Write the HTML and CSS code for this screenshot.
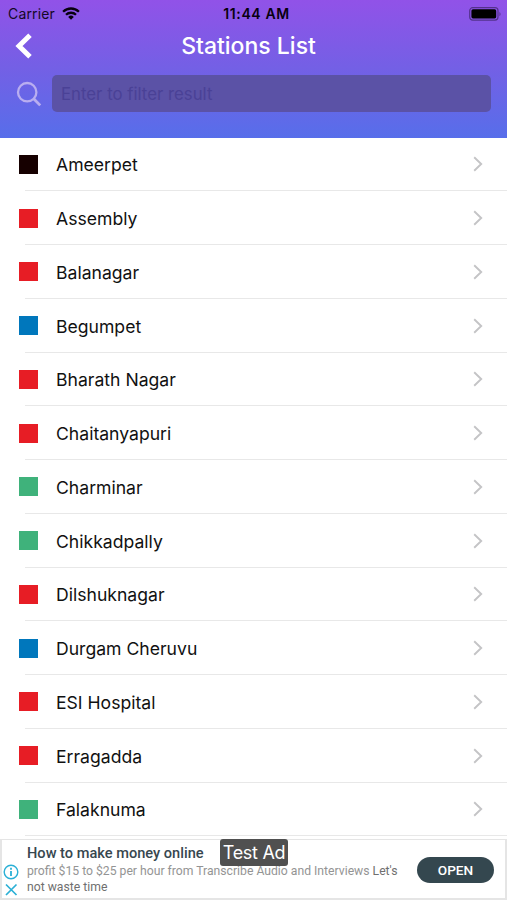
FILE: index.html
```html
<!DOCTYPE html>
<html lang="en">
<head>
<meta charset="utf-8">
<title>Stations List</title>
<link rel="stylesheet" href="styles.css">
</head>
<body>
<div class="app">
  <header class="header">
    <div class="status">
      <div class="carrier"><span>Carrier</span>
        <svg class="wifi" width="18" height="13" viewBox="0 0 18 13"><g fill="none" stroke="#08000f" stroke-width="2.3"><path d="M1.1 4.7a11.3 11.3 0 0 1 15.8 0"/><path d="M4 7.8a7.1 7.1 0 0 1 10 0"/></g><path fill="#08000f" d="M6.2 9.9a4 4 0 0 1 5.6 0L9 12.7z"/></svg>
      </div>
      <span class="time">11:44 AM</span>
      <svg class="battery" width="33" height="14" viewBox="0 0 33 14"><rect x=".7" y=".7" width="28.3" height="12.4" rx="3" fill="none" stroke="#08000f" stroke-opacity=".42" stroke-width="1.2"/><rect x="2.4" y="2.3" width="24.8" height="9.1" rx="1.6" fill="#000"/><path d="M30.5 4.7q2 2.3 0 4.6z" fill="#08000f" fill-opacity=".45"/></svg>
    </div>
    <div class="nav">
      <svg class="back" width="18" height="26" viewBox="0 0 18 26"><path d="M16 2.3 5 13l11 10.7" fill="none" stroke="#fff" stroke-width="5"/></svg>
      <h1 class="title">Stations List</h1>
      <span></span>
    </div>
    <div class="search">
      <svg width="26" height="26" viewBox="0 0 26 26"><g fill="none" stroke="#b9aef0" stroke-width="2.3"><circle cx="11.2" cy="11.2" r="9.2"/><path d="m17.7 17.7 6.5 6.7" stroke-width="2.8"/></g></svg>
      <div class="field">Enter to filter result</div>
    </div>
  </header>
  <main class="list">
    <div class="row"><i class="mark black"></i><span class="name">Ameerpet</span><svg class="chevron" viewBox="0 0 10 16"><path d="m1.2 1.2 7 6.8-7 6.8"/></svg></div>
    <div class="row"><i class="mark red"></i><span class="name">Assembly</span><svg class="chevron" viewBox="0 0 10 16"><path d="m1.2 1.2 7 6.8-7 6.8"/></svg></div>
    <div class="row"><i class="mark red"></i><span class="name">Balanagar</span><svg class="chevron" viewBox="0 0 10 16"><path d="m1.2 1.2 7 6.8-7 6.8"/></svg></div>
    <div class="row"><i class="mark blue"></i><span class="name">Begumpet</span><svg class="chevron" viewBox="0 0 10 16"><path d="m1.2 1.2 7 6.8-7 6.8"/></svg></div>
    <div class="row"><i class="mark red"></i><span class="name">Bharath Nagar</span><svg class="chevron" viewBox="0 0 10 16"><path d="m1.2 1.2 7 6.8-7 6.8"/></svg></div>
    <div class="row"><i class="mark red"></i><span class="name">Chaitanyapuri</span><svg class="chevron" viewBox="0 0 10 16"><path d="m1.2 1.2 7 6.8-7 6.8"/></svg></div>
    <div class="row"><i class="mark green"></i><span class="name">Charminar</span><svg class="chevron" viewBox="0 0 10 16"><path d="m1.2 1.2 7 6.8-7 6.8"/></svg></div>
    <div class="row"><i class="mark green"></i><span class="name">Chikkadpally</span><svg class="chevron" viewBox="0 0 10 16"><path d="m1.2 1.2 7 6.8-7 6.8"/></svg></div>
    <div class="row"><i class="mark red"></i><span class="name">Dilshuknagar</span><svg class="chevron" viewBox="0 0 10 16"><path d="m1.2 1.2 7 6.8-7 6.8"/></svg></div>
    <div class="row"><i class="mark blue"></i><span class="name">Durgam Cheruvu</span><svg class="chevron" viewBox="0 0 10 16"><path d="m1.2 1.2 7 6.8-7 6.8"/></svg></div>
    <div class="row"><i class="mark red"></i><span class="name">ESI Hospital</span><svg class="chevron" viewBox="0 0 10 16"><path d="m1.2 1.2 7 6.8-7 6.8"/></svg></div>
    <div class="row"><i class="mark red"></i><span class="name">Erragadda</span><svg class="chevron" viewBox="0 0 10 16"><path d="m1.2 1.2 7 6.8-7 6.8"/></svg></div>
    <div class="row"><i class="mark green"></i><span class="name">Falaknuma</span><svg class="chevron" viewBox="0 0 10 16"><path d="m1.2 1.2 7 6.8-7 6.8"/></svg></div>
  </main>
  <aside class="ad">
    <div class="ad-icons">
      <svg width="16" height="16" viewBox="0 0 16 16"><circle cx="8" cy="8" r="6.8" fill="none" stroke="#2bb0d6" stroke-width="1.4"/><path d="M8 7v5M8 3.7v2" stroke="#2bb0d6" stroke-width="1.8"/></svg>
      <svg width="16" height="14" viewBox="0 0 16 14"><path d="m3 1.5 10.5 10.5M13.500 1.500 3 12" stroke="#2bb0d6" stroke-width="1.7"/></svg>
    </div>
    <div class="ad-text">
      <div class="ad-title">How to make money online</div>
      <div class="ad-line">profit $15 to $25 per hour from Transcribe Audio and Interviews <span class="dark">Let's</span></div>
      <div class="ad-line dark">not waste time</div>
    </div>
    <div class="open">OPEN</div>
    <div class="test">Test Ad</div>
  </aside>
</div>
</body>
</html>
```
FILE: styles.css
```css
* { box-sizing: border-box; }
body { margin: 0; background: #fff; font-family: Inter, "Liberation Sans", sans-serif; }
.app { width: 507px; height: 900px; overflow: hidden; display: flex; flex-direction: column; }
.header { height: 137.6px; flex: none; background: linear-gradient(#9152e8, #7360e5 50%, #576eea); }
.status { height: 27px; display: grid; grid-template-columns: 1fr auto 1fr; align-items: center; padding: 0 5px 0 8px; }
.carrier { display: flex; align-items: center; gap: 7px; font-size: 14px; letter-spacing: .15px; color: #150825; }
.time { font-size: 14px; font-weight: 600; letter-spacing: .6px; color: #08000f; padding-left: 3px; }
.battery { justify-self: end; }
.nav { height: 38px; display: grid; grid-template-columns: 1fr auto 1fr; align-items: center; padding: 0 24px 0 14px; }
.title { margin: 0; font-size: 23px; font-weight: 500; color: #fff; white-space: nowrap; }
.search { display: flex; align-items: center; height: 37px; margin-top: 10px; padding: 0 16px; gap: 10px; }
.search svg { flex: none; }
.field { flex: 1; height: 37px; border-radius: 5px; background: #5b52a6; color: #4a4196; font-size: 16.8px; line-height: 38px; padding-left: 9px; }
.list { height: 701.4px; flex: none; overflow: hidden; background: #fff; }
.row { height: 53.75px; display: flex; align-items: center; padding: 0 24px 0 19px; background: linear-gradient(#e8e8e8, #e8e8e8) 25px 100% / 100% 1px no-repeat; }
.mark { width: 19px; height: 19px; margin-right: 18px; }
.black { background: #160000; }
.red { background: #e71d25; }
.blue { background: #0077bc; }
.green { background: #3fb27b; }
.name { flex: 1; padding-top: .6px; font-size: 17.6px; color: #111; }
.chevron { width: 10px; height: 16px; fill: none; stroke: #c4c4c6; stroke-width: 1.9; }
.ad { position: relative; flex: 1; display: flex; border: 2px solid #e5e5e5; border-top-width: 1px; background: #fff; font-family: Roboto, sans-serif; }
.ad-icons { width: 25px; padding: 24px 0 0 1px; display: flex; flex-direction: column; gap: 3px; }
.ad-text { flex: 1; padding-top: 4px; white-space: nowrap; }
.ad-title { font-size: 14.6px; line-height: 19px; font-weight: 500; color: #37474f; }
.ad-line { font-size: 12.2px; line-height: 16px; color: #949494; }
.dark, .ad-line.dark { color: #6f6f6f; }
.open { width: 77px; height: 26px; margin: 17px 11px 0 0; border-radius: 13px; background: #34474f; color: #fff; font-size: 13.6px; font-weight: 500; line-height: 26px; text-align: center; }
.test { position: absolute; left: 218px; top: -1px; width: 68px; height: 27px; border-radius: 3px; background: #505050; color: #fff; font-family: Inter, sans-serif; font-size: 18px; letter-spacing: -.3px; line-height: 28px; text-align: center; white-space: nowrap; }
```
